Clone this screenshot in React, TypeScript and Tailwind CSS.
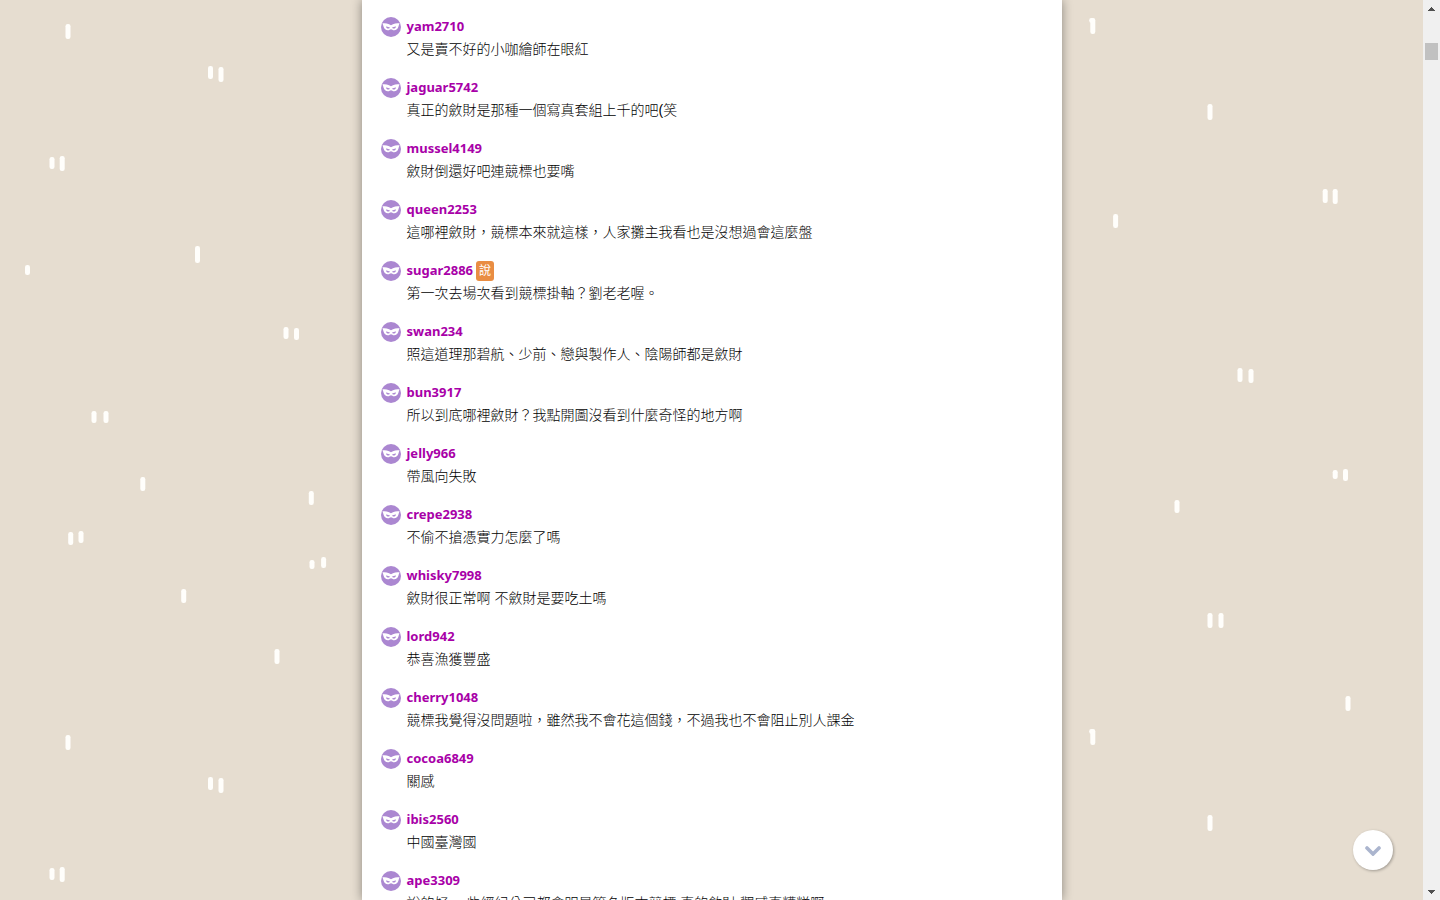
type Reply = {
  user: string
  text: string
  badge?: string
}

const replies: Reply[] = [
  { user: 'yam2710', text: '又是賣不好的小咖繪師在眼紅' },
  { user: 'jaguar5742', text: '真正的斂財是那種一個寫真套組上千的吧(笑' },
  { user: 'mussel4149', text: '斂財倒還好吧連競標也要嘴' },
  { user: 'queen2253', text: '這哪裡斂財，競標本來就這樣，人家攤主我看也是沒想過會這麼盤' },
  { user: 'sugar2886', text: '第一次去場次看到競標掛軸？劉老老喔。', badge: '說' },
  { user: 'swan234', text: '照這道理那碧航、少前、戀與製作人、陰陽師都是斂財' },
  { user: 'bun3917', text: '所以到底哪裡斂財？我點開圖沒看到什麼奇怪的地方啊' },
  { user: 'jelly966', text: '帶風向失敗' },
  { user: 'crepe2938', text: '不偷不搶憑實力怎麼了嗎' },
  { user: 'whisky7998', text: '斂財很正常啊 不斂財是要吃土嗎' },
  { user: 'lord942', text: '恭喜漁獲豐盛' },
  { user: 'cherry1048', text: '競標我覺得沒問題啦，雖然我不會花這個錢，不過我也不會阻止別人課金' },
  { user: 'cocoa6849', text: '關感' },
  { user: 'ibis2560', text: '中國臺灣國' },
  { user: 'ape3309', text: '說的好 一些經紀公司都會明星簽名版本競標 真的斂財 觀感真糟糕啊' },
]

// [center x, top, bottom] of each brush stroke in one wallpaper tile
const strokes = [
  [68, 24, 39],
  [210.5, 66, 79],
  [221, 67, 82],
  [52, 157, 169],
  [62.2, 156, 171],
  [197.5, 246, 263],
  [27.5, 265, 275],
  [286, 327, 339],
  [296.5, 328, 340],
  [94, 411, 423],
  [106, 411, 423],
  [142.8, 477, 491],
  [311.3, 491, 505],
  [70.7, 532, 545],
  [81, 531, 543],
  [312, 560, 569],
  [323.6, 557, 568],
  [183.7, 589, 603],
  [277, 649, 664],
  [1092.8, 18, 34],
  [1210, 104, 120],
  [1325.2, 189, 203],
  [1335.2, 189, 204],
  [1115.6, 214, 228],
  [1240, 368, 382],
  [1251, 369, 383],
  [1335.2, 470, 479],
  [1345.5, 469, 481],
  [1177, 500, 513],
  [1210, 613, 628],
  [1221, 613, 628],
  [1348, 696, 711],
]

function Wallpaper() {
  return (
    <svg className="absolute inset-0 h-full w-full" aria-hidden="true">
      <defs>
        <pattern id="drizzle" width="1440" height="711" patternUnits="userSpaceOnUse">
          {strokes.map(([x, top, bottom]) => (
            <rect key={`${x}-${top}`} x={x - 2.5} y={top} width="5" height={bottom - top} rx="2.2" fill="#fffefb" />
          ))}
          <circle cx="1091.500" cy="20.500" r="2.400" fill="#fffefb" />
        </pattern>
      </defs>
      <rect width="100%" height="100%" fill="url(#drizzle)" />
    </svg>
  )
}

function MaskAvatar() {
  return (
    <svg viewBox="0 0 20 20" className="size-5 shrink-0" aria-hidden="true">
      <circle cx="10" cy="10" r="10" fill="#ab87d1" />
      <path
        fill="#fff"
        fillRule="evenodd"
        d="M1.400 6.200C4 6.200 7.600 6.500 10 8.200c2.400-1.700 6-2 8.600-2-.6 1.200-.8 2.300-1.200 3.500-.6 2.200-2.200 3.600-4.200 3.600-1.500 0-2.200-1.100-3.200-1.100s-1.700 1.100-3.200 1.100c-2 0-3.600-1.400-4.200-3.600C2.200 8.500 2 7.400 1.400 6.200ZM5 9.400c.3 1.400 1.100 2.100 2.200 2.100.9 0 1.500-.4 1.700-1.100C7.900 10.400 6.500 9.200 5 9.400Zm10 0c-1.500-.2-2.900 1-3.900 1 .2.7.8 1.100 1.700 1.100 1.100 0 1.900-.7 2.200-2.100Z"
      />
    </svg>
  )
}

function ReplyItem({ user, text, badge }: Reply) {
  return (
    <li>
      <div className="flex h-5 items-start">
        <MaskAvatar />
        <a href={`#${user}`} className="ml-1.5 text-[13px] leading-[18px] font-bold text-[#a800a8]">
          {user}
        </a>
        {badge && (
          <span className="ml-[3px] h-5 w-[18px] rounded-[3px] bg-[#e98d43] text-center text-xs leading-5 text-white">
            {badge}
          </span>
        )}
      </div>
      <p className="pl-[26px] font-['Liberation_Sans','Noto_Sans_CJK_TC',sans-serif] text-sm leading-6 font-light whitespace-nowrap text-black">
        {text}
      </p>
    </li>
  )
}

function ScrollRail() {
  return (
    <div className="flex w-[17px] shrink-0 flex-col items-center bg-[#f0f0f0]">
      <button type="button" aria-label="向上捲動" className="flex h-[17px] w-full items-center justify-center">
        <svg viewBox="0 0 7 4" className="h-1 w-[7px]" shapeRendering="crispEdges">
          <path d="M0 4h7L3.500 0Z" fill="#505050" />
        </svg>
      </button>
      <div className="mt-[26px] h-[17px] w-[13px] bg-[#c1c1c1]" />
      <button type="button" aria-label="向下捲動" className="mt-auto flex h-[17px] w-full items-center justify-center">
        <svg viewBox="0 0 7 4" className="h-1 w-[7px]" shapeRendering="crispEdges">
          <path d="M0 0h7L3.500 4Z" fill="#505050" />
        </svg>
      </button>
    </div>
  )
}

export default function App() {
  return (
    <div className="flex h-screen overflow-hidden bg-[#e6ddd0] font-['Noto_Sans','Noto_Sans_CJK_TC',sans-serif]">
      <div className="relative flex flex-1 justify-center overflow-hidden">
        <Wallpaper />
        <main className="relative w-full max-w-[700px] bg-white px-[19px] pt-[17px] shadow-[0_0_10px_rgba(0,0,0,0.4)]">
          <ul className="flex flex-col gap-[17px]">
            {replies.map((reply) => (
              <ReplyItem key={reply.user} {...reply} />
            ))}
          </ul>
        </main>
        <button
          type="button"
          aria-label="跳到最新回應"
          className="absolute right-[30px] bottom-[30px] flex size-10 items-center justify-center rounded-full bg-white shadow-[1px_1px_3px_rgba(0,0,0,0.3)]"
        >
          <svg viewBox="0 0 16 10" className="mt-0.5 h-2.5 w-4" fill="none">
            <path d="M2 2l6 6 6-6" stroke="#abb5ce" strokeWidth="3.600" strokeLinecap="round" />
          </svg>
        </button>
      </div>
      <ScrollRail />
    </div>
  )
}
